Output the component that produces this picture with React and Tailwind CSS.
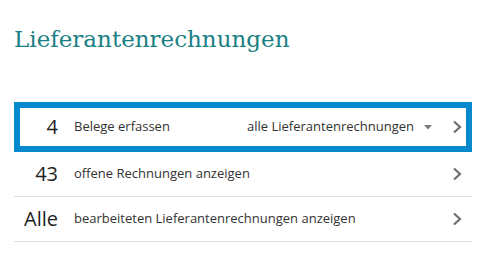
import React from "react";

const Chevron = () => (
  <svg width="10" height="14" viewBox="0 0 10 14" className="shrink-0">
    <polyline points="2,1.5 8,7 2,12.5" fill="none" stroke="#6e6e6e" strokeWidth="2.2" />
  </svg>
);

const Caret = () => (
  <svg width="8" height="5" viewBox="0 0 8 5" className="shrink-0">
    <polygon points="0,0 8,0 4,4.5" fill="#7a7a7a" />
  </svg>
);

const Row = ({ count, label, children, active }) => (
  <div
    className={
      active
        ? "flex h-[50px] items-center border-[6px] border-[#0789cd] pr-[4px]"
        : "flex h-[45px] items-center border-b border-[#dedede] px-[6px] pr-[10px]"
    }
  >
    <span className="w-[38px] text-right text-[20px] leading-none text-[#1e1e1e]">
      {count}
    </span>
    <span className="ml-[16px] text-[13px] text-[#333]">{label}</span>
    <div className="ml-auto flex items-center">
      {children}
      <Chevron />
    </div>
  </div>
);

export default function App() {
  return (
    <div
      className="h-[260px] w-[480px] bg-white pl-[14px] pr-[8px]"
      style={{ fontFamily: '"Open Sans", "Noto Sans", sans-serif' }}
    >
      <h1
        className="pt-[24px] text-[23px] leading-[30px] text-[#1b7f86]"
        style={{ fontFamily: '"DejaVu Serif", "Liberation Serif", serif' }}
      >
        Lieferantenrechnungen
      </h1>
      <div className="mt-[48px]">
        <Row count="4" label="Belege erfassen" active>
          <span className="text-[13px] text-[#333]">alle Lieferantenrechnungen</span>
          <span className="ml-[10px] mr-[20px]">
            <Caret />
          </span>
        </Row>
        <Row count="43" label="offene Rechnungen anzeigen" />
        <Row count="Alle" label="bearbeiteten Lieferantenrechnungen anzeigen" />
      </div>
    </div>
  );
}
